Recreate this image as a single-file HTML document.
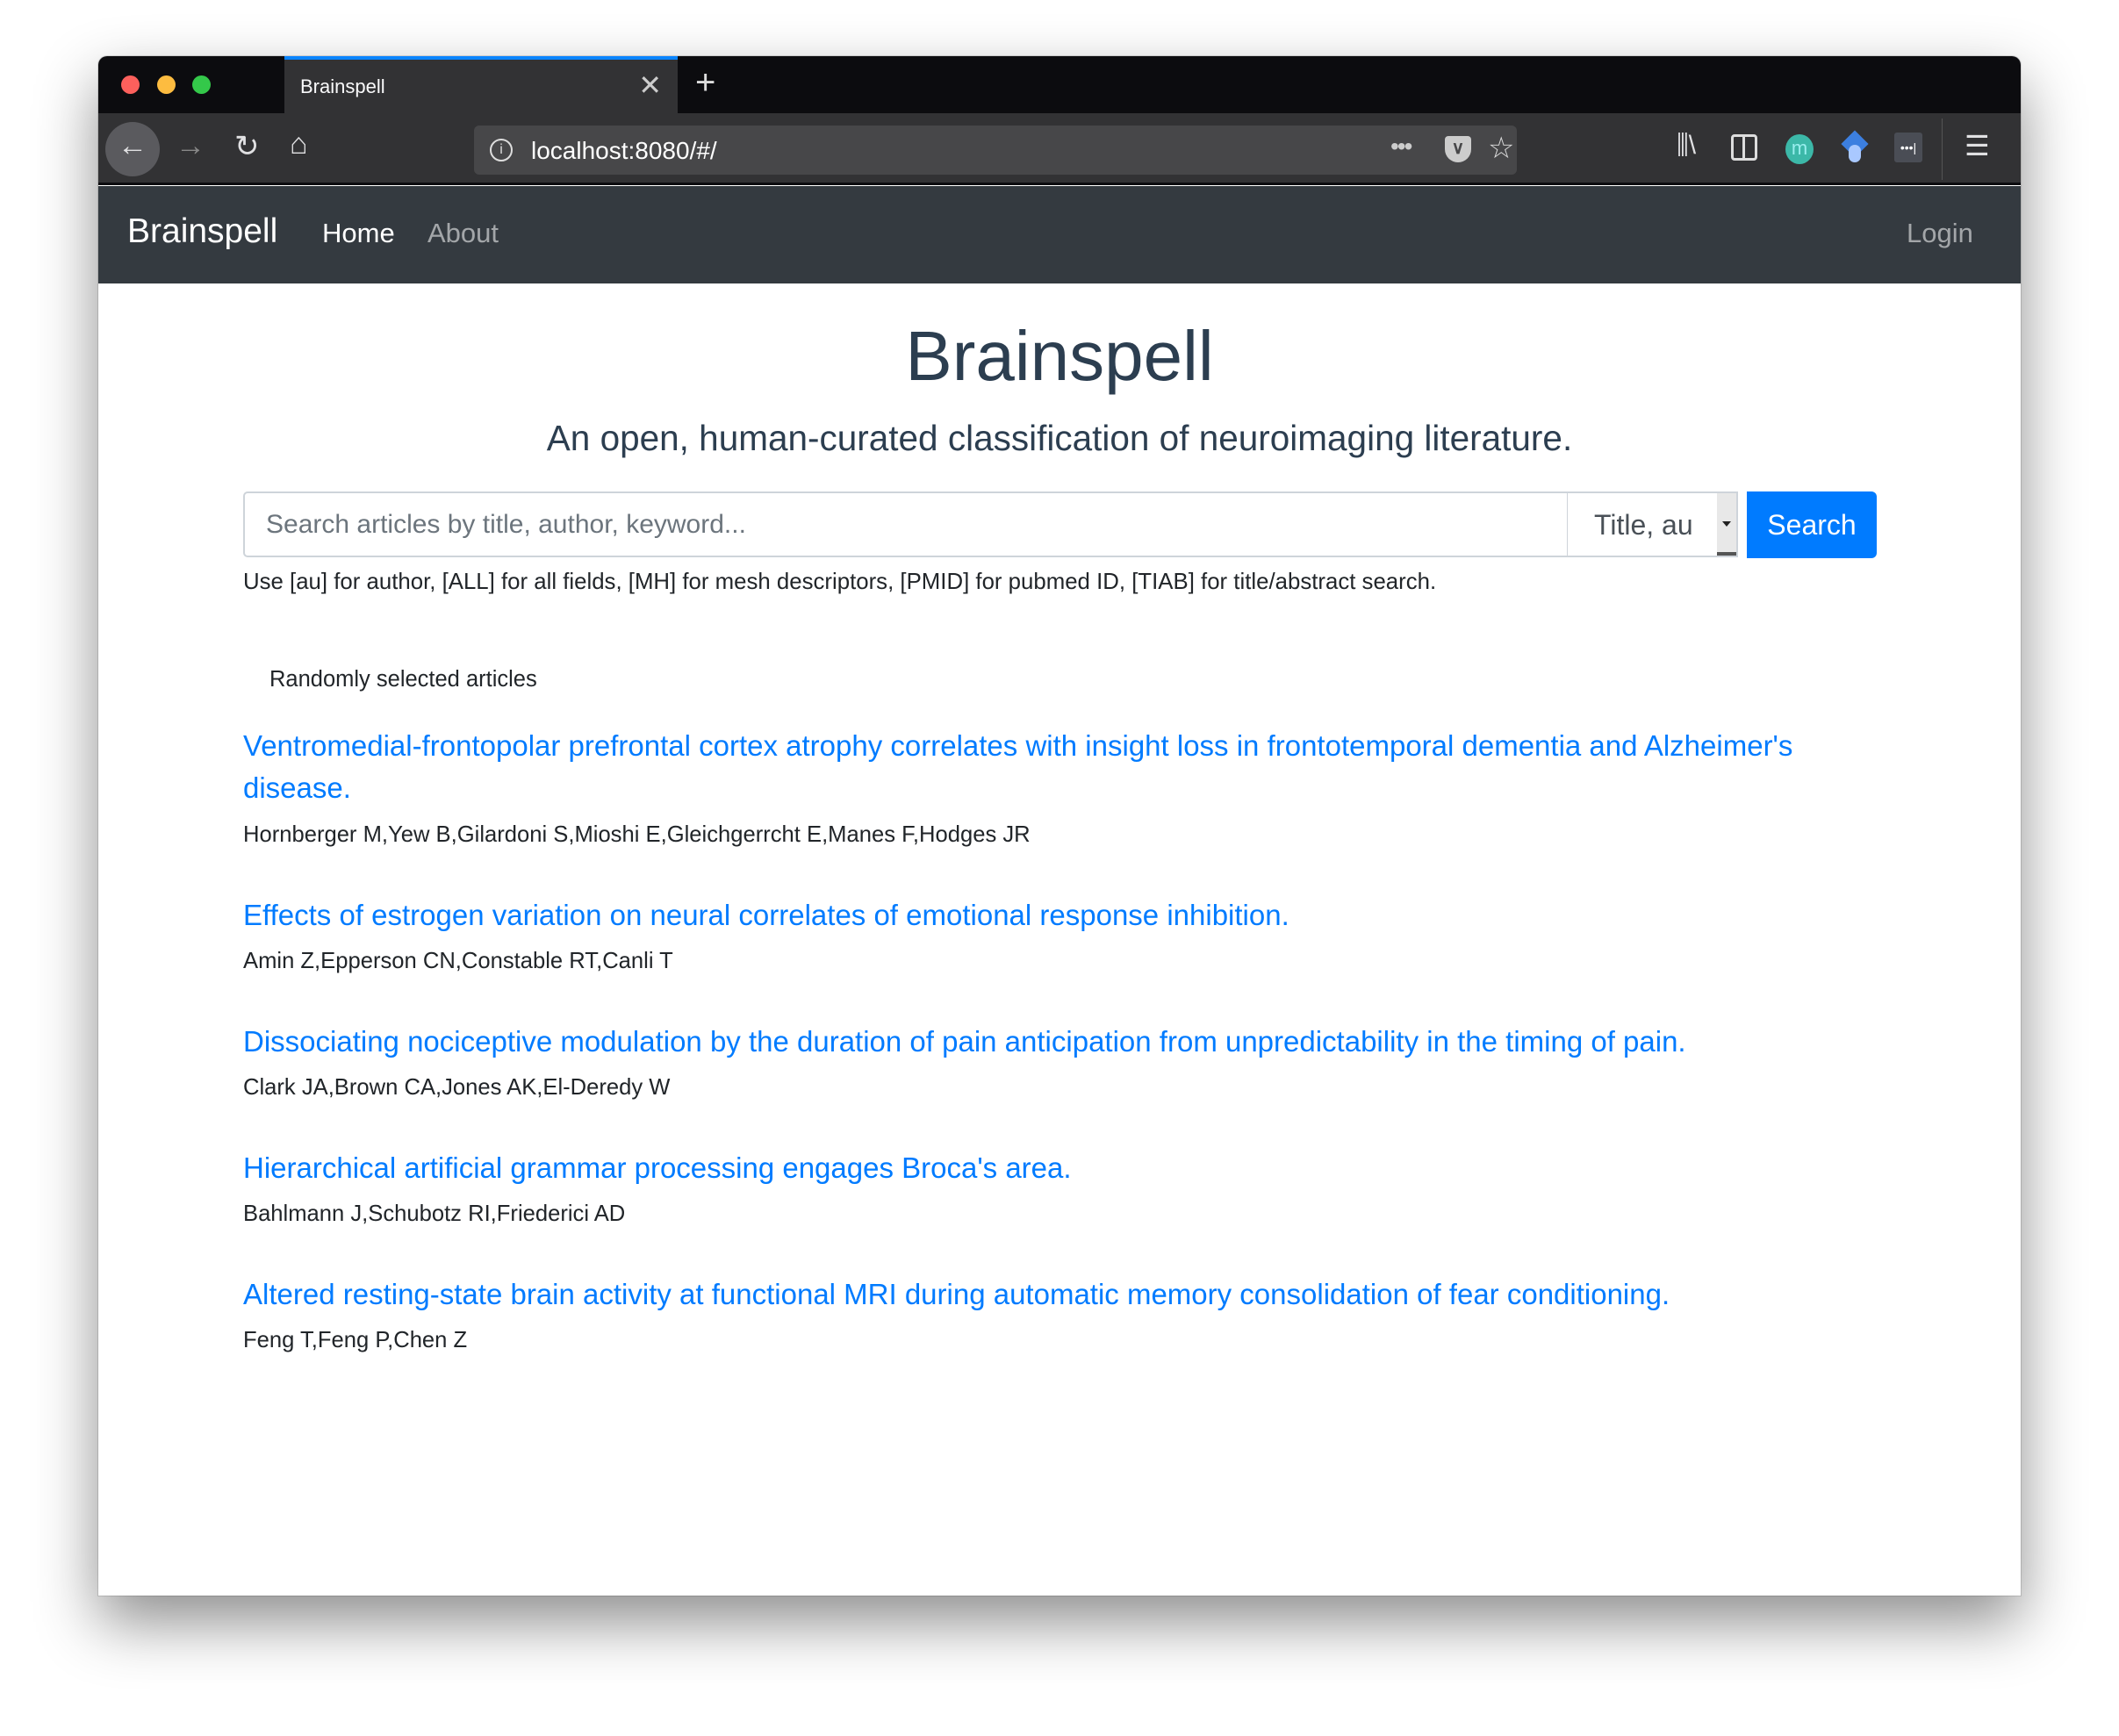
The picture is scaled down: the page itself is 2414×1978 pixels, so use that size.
<!DOCTYPE html>
<html><head><meta charset="utf-8"><style>
*{box-sizing:border-box;margin:0;padding:0}
body{width:2414px;height:1978px;background:#fff;font-family:"Liberation Sans",sans-serif;position:relative;overflow:hidden}
.win{position:absolute;left:112px;top:64px;width:2190px;height:1754px;background:#fff;border-radius:10px 10px 0 0;box-shadow:0 30px 70px rgba(0,0,0,.45),0 0 0 1px rgba(0,0,0,.12);overflow:hidden}
.tabbar{position:absolute;left:0;top:0;width:100%;height:65px;background:#0c0c0f}
.dot{position:absolute;top:22px;width:21px;height:21px;border-radius:50%}
.tab{position:absolute;left:212px;top:0;width:448px;height:65px;background:#323234;border-top:4px solid #0a84ff}
.tab span{position:absolute;left:18px;top:18px;color:#f9f9fa;font-size:22px}
.tab b{position:absolute;right:18px;top:10px;color:#ccc;font-size:32px;font-weight:normal}
.plus{position:absolute;left:680px;top:8px;color:#ddd;font-size:40px}
.toolbar{position:absolute;left:0;top:65px;width:100%;height:82px;background:#323234;border-bottom:3px solid #0c0c0f}
.ic{position:absolute;color:#e0e0e2;font-size:34px}
.url{position:absolute;left:428px;top:14px;width:1188px;height:56px;background:#474749;border-radius:6px}
.url .t{position:absolute;left:65px;top:13px;color:#fff;font-size:28px}
.nav{position:absolute;left:0;top:148px;width:100%;height:111px;background:#343a40}
.nav span{position:absolute;font-size:31px;top:36px}
h1{position:absolute;top:296px;width:100%;text-align:center;font-weight:normal;font-size:80px;color:#2c3e50}
.sub{position:absolute;top:412px;width:100%;text-align:center;font-size:40.5px;color:#2c3e50}
.inp{position:absolute;left:165px;top:496px;width:1510px;height:75px;border:2px solid #ced4da;border-radius:5px 0 0 5px;background:#fff}
.inp span{position:absolute;left:24px;top:19px;font-size:30px;color:#6c757d}
.sel{position:absolute;left:1673px;top:496px;width:195px;height:75px;border:2px solid #ced4da;border-left:1px solid #ced4da;background:#fff}
.sel span{position:absolute;left:30px;top:18px;font-size:32px;color:#495057}
.sel i{position:absolute;right:0;top:0;width:22px;height:71px;background:#e8e8e8;border-bottom:4px solid #555}
.sel i:after{content:"";position:absolute;left:6px;top:32px;border:5px solid transparent;border-top:6px solid #222}
.btn{position:absolute;left:1878px;top:496px;width:148px;height:76px;background:#007bff;border-radius:0 6px 6px 0;color:#fff;font-size:32px;text-align:center;line-height:76px}
.help{position:absolute;left:165px;top:585px;font-size:25.8px;color:#212529;white-space:nowrap}
.lab{position:absolute;left:195px;top:696px;font-size:25.5px;color:#212529}
.a{position:absolute;left:165px;font-size:33px;color:#007bff;white-space:nowrap;line-height:48px}
.au{position:absolute;left:165px;font-size:25.6px;color:#212529;white-space:nowrap}
</style></head><body>
<div class="win">
 <div class="tabbar">
  <div class="dot" style="left:26px;background:#fc605c"></div>
  <div class="dot" style="left:67px;background:#fdbc40"></div>
  <div class="dot" style="left:107px;background:#34c84a"></div>
  <div class="tab"><span>Brainspell</span><b>✕</b></div>
  <div class="plus">+</div>
 </div>
 <div class="toolbar">
  <div style="position:absolute;left:8px;top:10px;width:62px;height:62px;border-radius:50%;background:#5a5a5e"></div>
  <div class="ic" style="left:22px;top:18px">←</div>
  <div class="ic" style="left:88px;top:18px;color:#888">→</div>
  <div class="ic" style="left:155px;top:18px">↻</div>
  <div class="ic" style="left:218px;top:16px">⌂</div>
  <div class="url">
   <div style="position:absolute;left:18px;top:15px;width:26px;height:26px;border:2px solid #ddd;border-radius:50%;color:#ddd;font-size:16px;text-align:center;line-height:22px">i</div>
   <div class="t">localhost:8080/#/</div>
   <div style="position:absolute;left:1044px;top:8px;color:#ccc;font-size:28px;letter-spacing:-2px">•••</div>
   <div style="position:absolute;left:1106px;top:12px;width:30px;height:30px;background:#ccc;border-radius:4px 4px 15px 15px;color:#474749;font-size:20px;text-align:center;line-height:28px;font-weight:bold">∨</div>
   <div style="position:absolute;left:1155px;top:6px;color:#ddd;font-size:34px">☆</div>
  </div>
  <div class="ic" style="left:1798px;top:20px;font-size:30px">⫼\</div>
  <div style="position:absolute;left:1860px;top:24px;width:30px;height:30px;border:3px solid #ddd;border-radius:4px"><div style="position:absolute;left:10px;top:0;width:3px;height:24px;background:#ddd"></div></div>
  <div style="position:absolute;left:1922px;top:24px;width:32px;height:34px;border-radius:50%;background:#3cb8a8;color:#9ee;text-align:center;font-size:22px;line-height:32px">m</div>
  <div style="position:absolute;left:1990px;top:24px;width:22px;height:22px;background:#3c7fe0;transform:rotate(45deg)"></div>
  <div style="position:absolute;left:1994px;top:36px;width:14px;height:20px;border-radius:7px;background:#a9c8ff"></div>
  <div style="position:absolute;left:2046px;top:22px;width:32px;height:34px;background:#4a4d55;border-radius:3px;color:#fff;font-size:14px;text-align:center;line-height:34px">•••|</div>
  <div style="position:absolute;left:2100px;top:6px;width:1px;height:70px;background:#555"></div>
  <div class="ic" style="left:2126px;top:18px;font-size:32px">☰</div>
 </div>
 <div class="nav">
  <span style="left:33px;top:30px;font-size:39px;color:#fff">Brainspell</span>
  <span style="left:255px;color:#fff">Home</span>
  <span style="left:375px;color:rgba(255,255,255,.55)">About</span>
  <span style="left:2060px;color:rgba(255,255,255,.55)">Login</span>
 </div>
 <h1>Brainspell</h1>
 <div class="sub">An open, human-curated classification of neuroimaging literature.</div>
 <div class="inp"><span>Search articles by title, author, keyword...</span></div>
 <div class="sel"><span>Title, au</span><i></i></div>
 <div class="btn">Search</div>
 <div class="help">Use [au] for author, [ALL] for all fields, [MH] for mesh descriptors, [PMID] for pubmed ID, [TIAB] for title/abstract search.</div>
 <div class="lab">Randomly selected articles</div>
 <div class="a" style="top:762px">Ventromedial-frontopolar prefrontal cortex atrophy correlates with insight loss in frontotemporal dementia and Alzheimer's<br>disease.</div>
 <div class="au" style="top:873px">Hornberger M,Yew B,Gilardoni S,Mioshi E,Gleichgerrcht E,Manes F,Hodges JR</div>
 <div class="a" style="top:955px">Effects of estrogen variation on neural correlates of emotional response inhibition.</div>
 <div class="au" style="top:1017px">Amin Z,Epperson CN,Constable RT,Canli T</div>
 <div class="a" style="top:1099px">Dissociating nociceptive modulation by the duration of pain anticipation from unpredictability in the timing of pain.</div>
 <div class="au" style="top:1161px">Clark JA,Brown CA,Jones AK,El-Deredy W</div>
 <div class="a" style="top:1243px">Hierarchical artificial grammar processing engages Broca's area.</div>
 <div class="au" style="top:1305px">Bahlmann J,Schubotz RI,Friederici AD</div>
 <div class="a" style="top:1387px">Altered resting-state brain activity at functional MRI during automatic memory consolidation of fear conditioning.</div>
 <div class="au" style="top:1449px">Feng T,Feng P,Chen Z</div>
</div>
</body></html>
